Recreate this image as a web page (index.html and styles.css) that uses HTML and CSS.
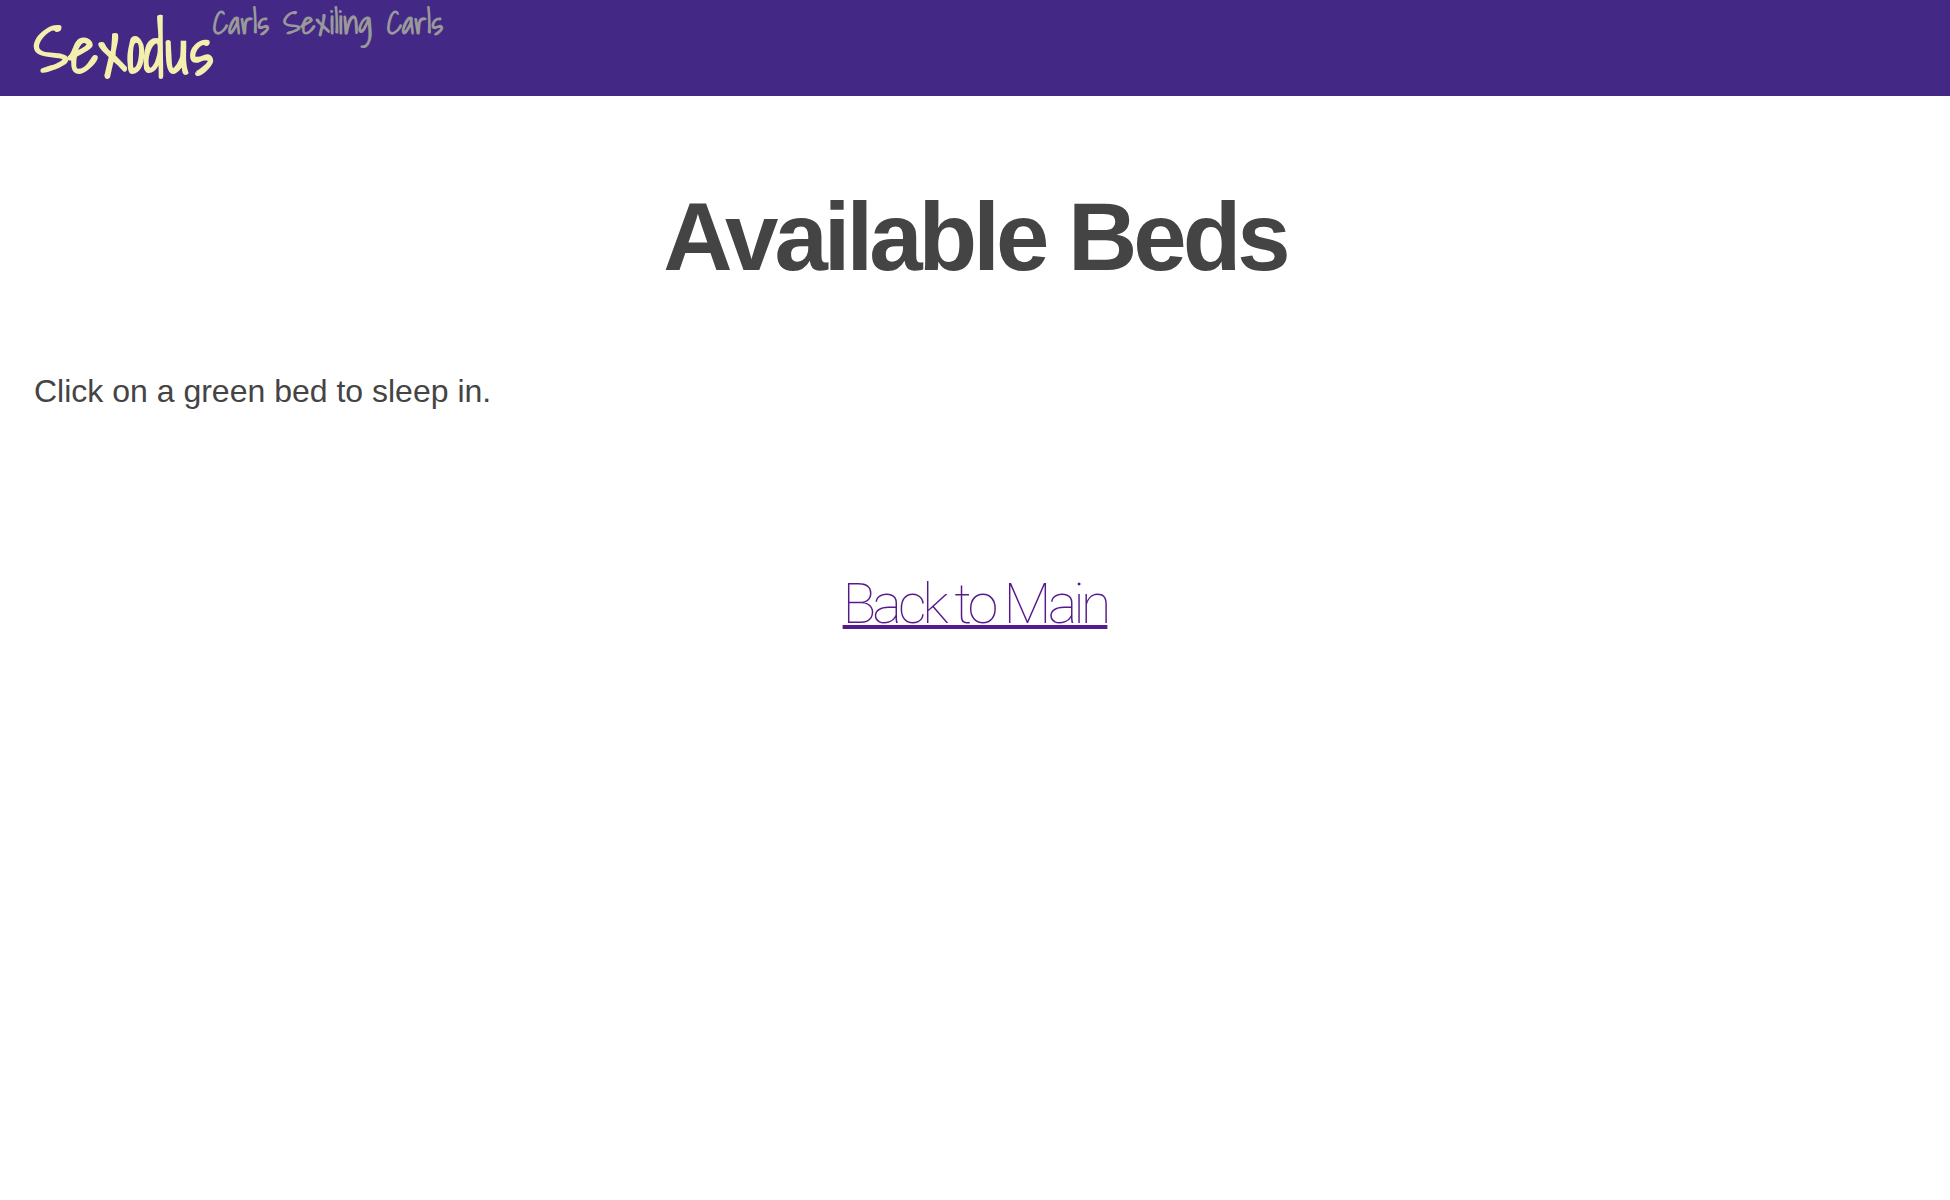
FILE: index.html
```html
<!DOCTYPE html>
<html lang="en">
<head>
<meta charset="utf-8">
<title>Sexodus</title>
<link rel="stylesheet" href="styles.css">
</head>
<body>
<header class="banner">
  <h1 class="logo">Sexodus</h1>
  <p class="tagline">Carls Sexiling Carls</p>
</header>
<main class="content">
  <h2 class="title">Available Beds</h2>
  <p class="hint">Click on a green bed to sleep in.</p>
  <nav class="back"><a class="back-link" href="#main">Back to Main</a></nav>
</main>
</body>
</html>
```
FILE: styles.css
```css
body {
  margin: 0;
  background: #fff;
  color: #444;
  font-family: "Helvetica Neue", "Liberation Sans", Arial, sans-serif;
}

.banner {
  display: flex;
  align-items: flex-start;
  padding: 4px 34px 0;
  background: #432886;
  font-family: "Shadows Into Light", "Liberation Sans", cursive;
}

.logo {
  margin: 0;
  color: #f5efae;
  font-size: 64px;
  font-weight: 700;
  line-height: 92px;
}

.tagline {
  margin: 0;
  color: #999;
  font-size: 32px;
  font-weight: 700;
  line-height: 36px;
}

.content {
  padding: 85px 34px;
}

.title {
  margin: 0;
  font-size: 96px;
  font-weight: 700;
  letter-spacing: -4px;
  line-height: 112px;
  text-align: center;
}

.hint {
  margin: 79px 0 0;
  font-size: 32px;
  line-height: 38px;
}

.back {
  margin-top: 160px;
  line-height: 68px;
  text-align: center;
}

.back-link {
  color: #551a8b;
  font-family: "Helvetica Neue", Roboto, sans-serif;
  font-size: 56px;
  font-weight: 100;
  letter-spacing: -4px;
  text-decoration-thickness: 4px;
}
```
